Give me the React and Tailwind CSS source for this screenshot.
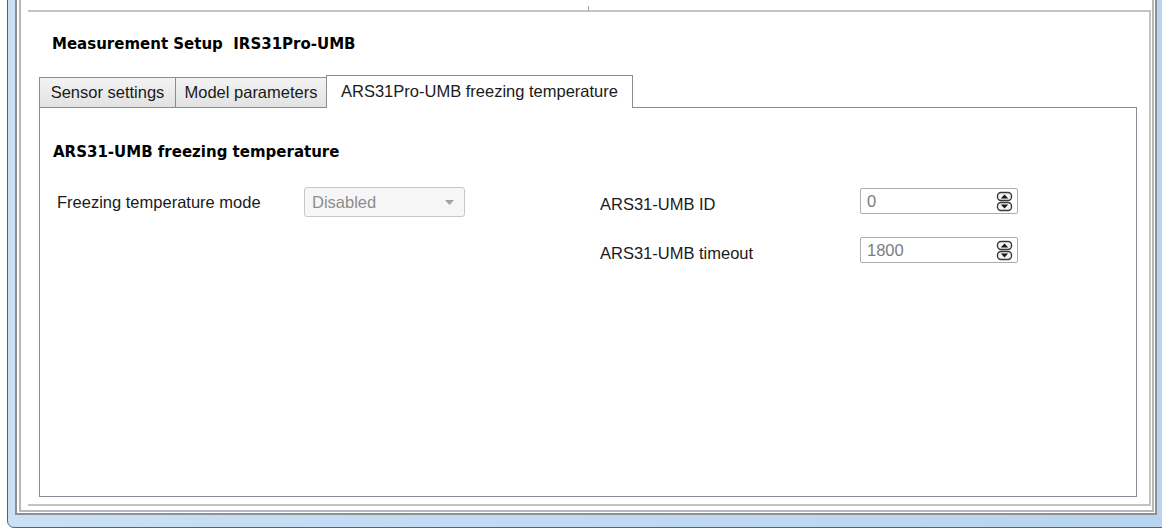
import React from "react";

// Up/down stepper glyph used by the numeric fields
function SpinArrows() {
  return (
    <svg width="17" height="21" viewBox="0 0 17 21">
      <rect x="1.5" y="1.5" width="14" height="8" rx="3.5" fill="#f3f3f3" stroke="#3a3a3a" strokeWidth="1.4" />
      <path d="M4.8 7.6 L8.5 3.6 L12.2 7.6 Z" fill="#161616" />
      <rect x="1.5" y="11.5" width="14" height="8" rx="3.5" fill="#f3f3f3" stroke="#3a3a3a" strokeWidth="1.4" />
      <path d="M4.8 13.4 L8.5 17.4 L12.2 13.4 Z" fill="#161616" />
    </svg>
  );
}

function SpinBox({ value }) {
  return (
    <div className="w-[158px] h-[26px] border border-[#abadb3] rounded-[2px] bg-white flex items-center justify-between pl-[6px] pr-[4px] text-[#7c7c7c]">
      <span>{value}</span>
      <SpinArrows />
    </div>
  );
}

function Field({ label, value }) {
  return (
    <div className="flex items-center">
      <div className="w-[260px] translate-y-[3px]">{label}</div>
      <SpinBox value={value} />
    </div>
  );
}

export default function App() {
  return (
    <div className="w-[1162px] h-[528px] overflow-hidden bg-white font-['Liberation_Sans',Arial,sans-serif] text-[16.5px] text-[#1a1a1a]">
      {/* window frame, top edge is off screen */}
      <div className="ml-[7px] -mt-[20px] w-[1170px] h-[548px] flex rounded-b-[7px] border border-[#56636f] bg-linear-to-r from-[#c9e0f5] to-[#b9d4ee] pl-[7px] pr-[19px] pb-[12px]">
        <div className="flex-1 flex flex-col bg-white border-2 border-t-0 border-[#8c9095] pr-[1px] pl-[2px] pb-[1px]">
          <div className="flex-1 flex flex-col border-2 border-t-0 border-[#b6b9bc] pr-[1px] pb-[4px]">
            <div className="relative flex-1 flex flex-col ml-[7px] mt-[29px] border-2 border-l-0 border-[#c3c3c3] pl-[11px] pr-[11px] pb-[7px]">
              <div className="absolute left-[560px] -top-[6px] w-px h-[5px] bg-[#a8a8a8]" />

              <div className="mt-[23px] ml-[13px] h-[18px] leading-[18px] font-['DejaVu_Sans',sans-serif] font-bold text-[15px] text-black whitespace-pre">
                {"Measurement Setup  IRS31Pro-UMB"}
              </div>

              {/* tab strip */}
              <div className="relative z-10 mt-[22px] flex items-end h-[32px]">
                <div className="w-[137px] h-[30px] border border-b-0 border-[#898c95] bg-linear-to-b from-[#f3f3f3] to-[#e2e2e2] flex items-center justify-center">
                  Sensor settings
                </div>
                <div className="w-[151px] h-[30px] border border-l-0 border-b-0 border-[#898c95] bg-linear-to-b from-[#f3f3f3] to-[#e2e2e2] flex items-center justify-center">
                  Model parameters
                </div>
                <div className="-ml-px -mb-px w-[307px] h-[33px] border border-b-0 border-[#898c95] bg-white flex items-center justify-center pb-[2px]">
                  ARS31Pro-UMB freezing temperature
                </div>
              </div>

              <div className="flex-1 w-[1098px] border border-[#898c95] bg-white pt-[35px] pl-[13px]">
                <div className="h-[18px] leading-[18px] font-['DejaVu_Sans',sans-serif] font-bold text-[15px] text-black">
                  ARS31-UMB freezing temperature
                </div>

                <div className="mt-[26px] pl-[4px] flex">
                  <div className="w-[543px] flex items-center h-[30px]">
                    <div className="w-[247px]">Freezing temperature mode</div>
                    <div className="w-[161px] h-[30px] border border-[#c8c8c8] rounded-[3px] bg-[#f6f6f6] flex items-center justify-between pl-[7px] pr-[10px] text-[#8d8d8d]">
                      <span>Disabled</span>
                      <svg width="9" height="5" viewBox="0 0 9 5">
                        <path d="M0 0 L9 0 L4.5 5 Z" fill="#a3a3a3" />
                      </svg>
                    </div>
                  </div>

                  <div className="mt-[1px] flex flex-col gap-[23px]">
                    <Field label="ARS31-UMB ID" value="0" />
                    <Field label="ARS31-UMB timeout" value="1800" />
                  </div>
                </div>
              </div>
            </div>
          </div>
        </div>
      </div>
    </div>
  );
}
